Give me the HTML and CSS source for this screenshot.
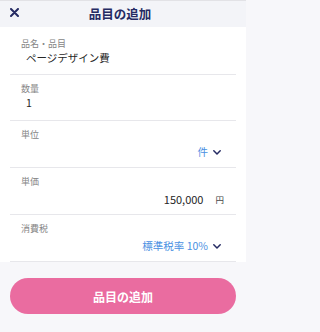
FILE: index.html
```html
<!DOCTYPE html>
<html lang="ja">
<head>
<meta charset="utf-8">
<link rel="stylesheet" href="styles.css">
</head>
<body>
<header class="topbar">
  <button class="close" aria-label="閉じる">
    <svg width="9" height="9" viewBox="0 0 9 9"><path d="M1 1 L8 8 M8 1 L1 8" stroke="#252b63" stroke-width="2" stroke-linecap="round" fill="none"/></svg>
  </button>
  <h1 class="title">品目の追加</h1>
</header>
<section class="form">
  <div class="field field-first">
    <div class="label">品名・品目</div>
    <div class="value">ページデザイン費</div>
  </div>
  <div class="field">
    <div class="label">数量</div>
    <div class="value">1</div>
  </div>
  <div class="field field-right">
    <div class="label">単位</div>
    <div class="select"><span class="blue">件</span><svg class="chev" width="8" height="5" viewBox="0 0 8 5"><path d="M0.8 0.8 L4 4 L7.2 0.8" stroke="#252b63" stroke-width="1.5" fill="none" stroke-linecap="round" stroke-linejoin="round"/></svg></div>
  </div>
  <div class="field field-right">
    <div class="label">単価</div>
    <div class="select price"><span class="num">150,000</span><span class="yen">円</span></div>
  </div>
  <div class="field field-right">
    <div class="label">消費税</div>
    <div class="select"><span class="blue">標準税率 10%</span><svg class="chev" width="8" height="5" viewBox="0 0 8 5"><path d="M0.8 0.8 L4 4 L7.2 0.8" stroke="#252b63" stroke-width="1.5" fill="none" stroke-linecap="round" stroke-linejoin="round"/></svg></div>
  </div>
</section>
<div class="actions">
  <button class="submit">品目の追加</button>
</div>
</body>
</html>
```

FILE: styles.css
```css
* { box-sizing: border-box; }
html, body { margin: 0; padding: 0; }
body {
  background: #f7f7fa;
  font-family: "Noto Sans CJK JP", "Noto Sans", sans-serif;
  width: 246px;
  height: 332px;
  overflow: hidden;
}
.topbar {
  height: 27px;
  background: #f3f4f8;
  border-top: 1px solid #e2e2e6;
  display: flex;
  align-items: center;
}
.close {
  width: 28px;
  height: 26px;
  border: 0;
  background: none;
  padding: 0 0 4px 10px;
  display: flex;
  align-items: center;
}
.title {
  flex: 1;
  margin: 0;
  padding-right: 34px;
  text-align: center;
  font-size: 12.5px;
  font-weight: 700;
  color: #252b63;
  line-height: 16px;
}
.form {
  background: #fff;
  padding: 0 10px;
}
.field {
  height: 46px;
  border-bottom: 1px solid #e7e7eb;
  padding: 7px 0 0 11px;
}
.field-first {
  height: 48px;
  padding-top: 10px;
}
.field-right {
  height: 47px;
}
.label {
  font-size: 9px;
  line-height: 13px;
  color: #858585;
}
.value {
  font-size: 10.5px;
  line-height: 16px;
  color: #262626;
  padding-left: 5px;
}
.select {
  display: flex;
  justify-content: flex-end;
  align-items: center;
  gap: 5px;
  padding-right: 15px;
  margin-top: 3px;
  height: 16px;
}
.blue {
  color: #4a90e2;
  font-size: 10.5px;
  line-height: 16px;
}
.chev { display: block; }
.price {
  gap: 12px;
  padding-right: 12px;
}
.num {
  font-size: 11px;
  color: #262626;
  line-height: 16px;
}
.yen {
  font-size: 8.5px;
  color: #444;
  line-height: 16px;
}
.actions {
  padding: 16px 10px 0;
}
.submit {
  width: 100%;
  height: 36px;
  border: 0;
  border-radius: 18px;
  background: #ea6ca0;
  color: #fff;
  font-family: "Noto Sans CJK JP", "Noto Sans", sans-serif;
  font-size: 12px;
  font-weight: 700;
}
```
